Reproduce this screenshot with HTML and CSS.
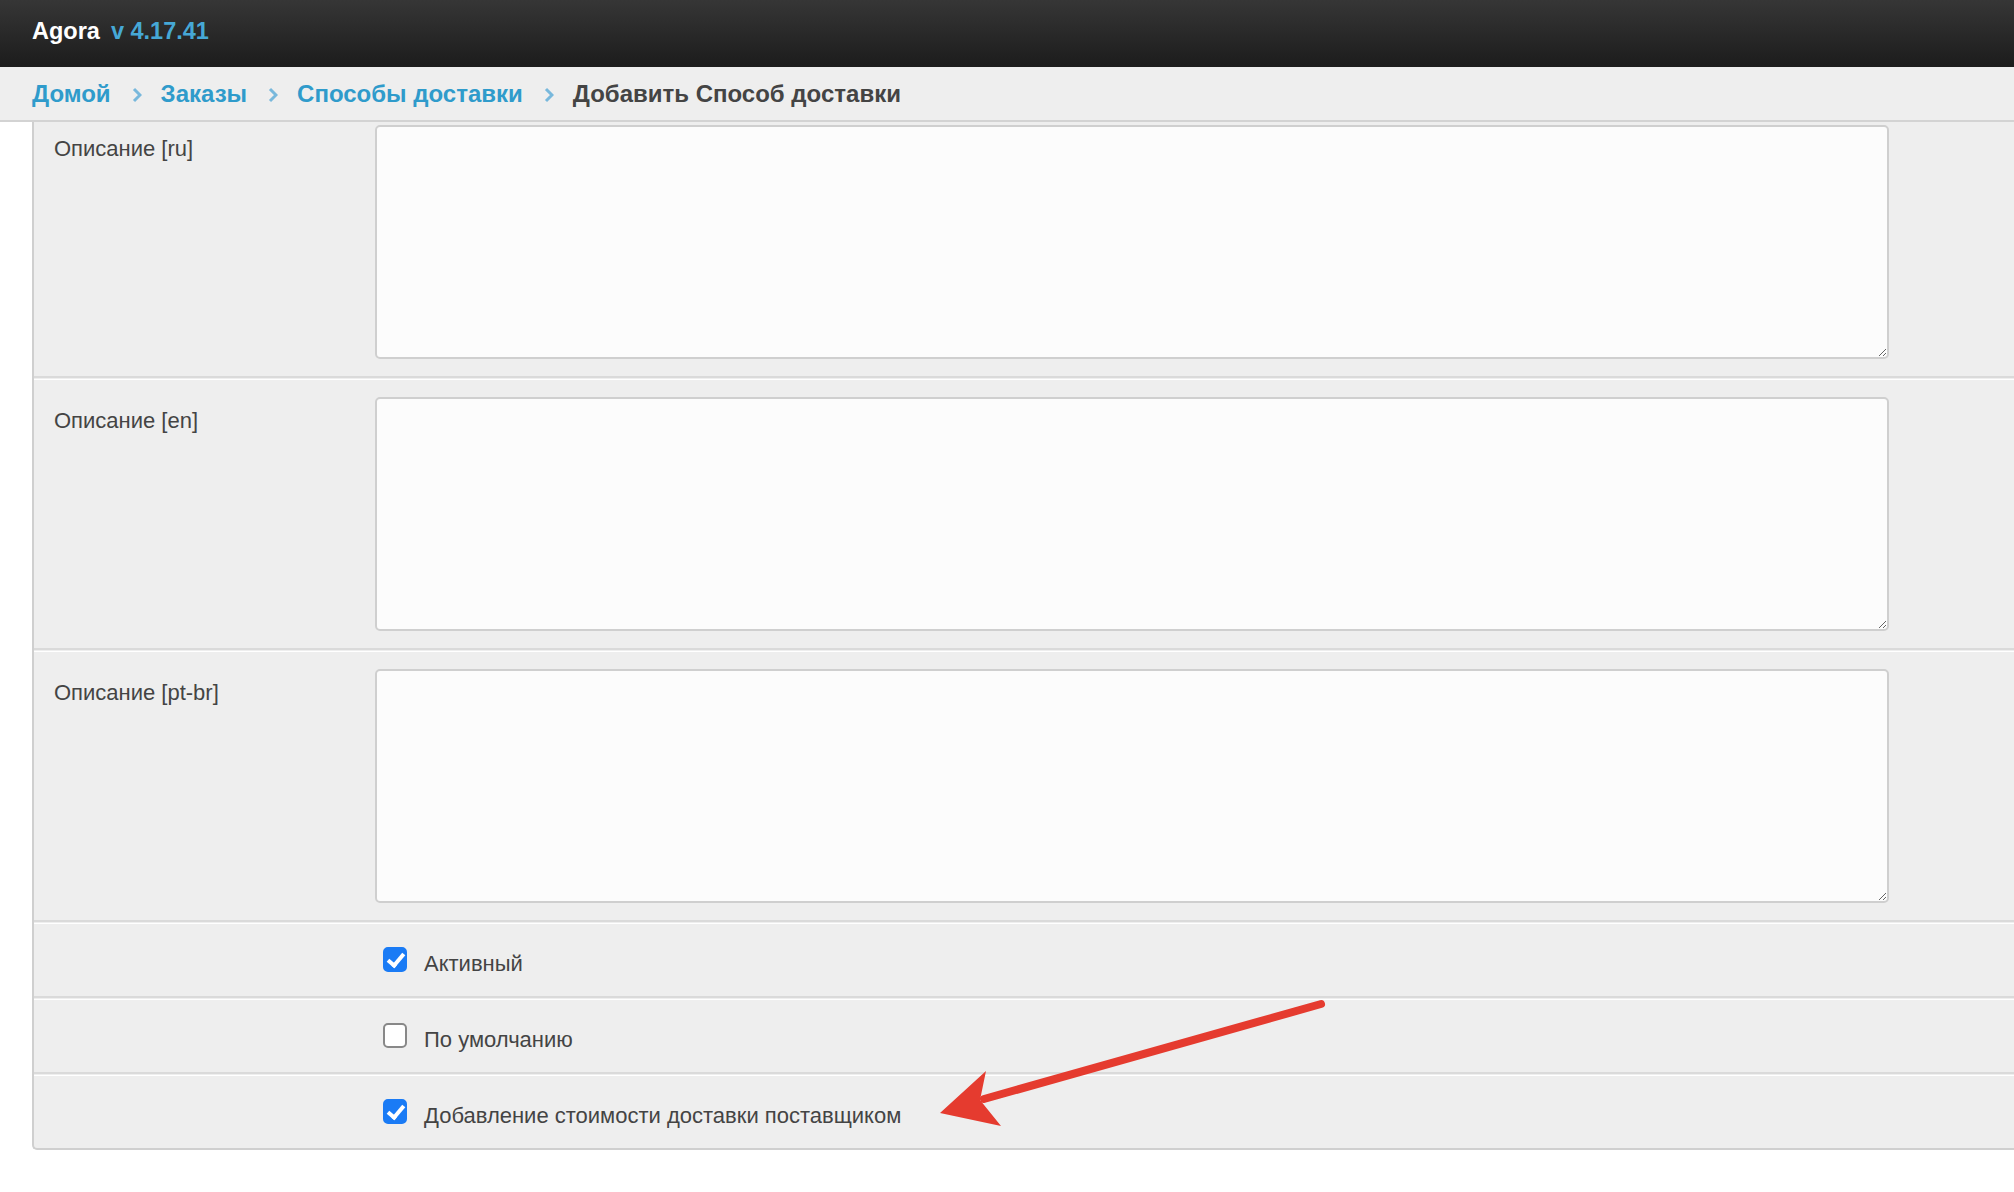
FILE: index.html
```
<!DOCTYPE html>
<html lang="ru">
<head>
	<meta charset="UTF-8">
	<meta name="viewport" content="width=device-width, initial-scale=1.0">
	<link rel="stylesheet" href="styles.css">
	<title>Agora — Добавить Способ доставки</title>
</head>
<body>
	<header class="topbar">
		<span class="brand">Agora</span>
		<span class="version">v 4.17.41</span>
	</header>

	<nav class="breadcrumbs">
		<a href="#">Домой</a>
		<svg class="crumb-sep" viewBox="0 0 10 16"><path d="M2 2l6 6-6 6"/></svg>
		<a href="#">Заказы</a>
		<svg class="crumb-sep" viewBox="0 0 10 16"><path d="M2 2l6 6-6 6"/></svg>
		<a href="#">Способы доставки</a>
		<svg class="crumb-sep" viewBox="0 0 10 16"><path d="M2 2l6 6-6 6"/></svg>
		<span class="current">Добавить Способ доставки</span>
	</nav>

	<main class="content">
		<form class="panel" action="">
			<div class="form-row first">
				<label class="field-label" for="desc_ru">Описание [ru]</label>
				<textarea id="desc_ru"></textarea>
			</div>
			<div class="form-row">
				<label class="field-label" for="desc_en">Описание [en]</label>
				<textarea id="desc_en"></textarea>
			</div>
			<div class="form-row">
				<label class="field-label" for="desc_pt">Описание [pt-br]</label>
				<textarea id="desc_pt"></textarea>
			</div>
			<div class="form-row check-row">
				<span></span>
				<label class="check">
					<input type="checkbox" checked>
					<span>Активный</span>
				</label>
			</div>
			<div class="form-row check-row">
				<span></span>
				<label class="check">
					<input type="checkbox">
					<span>По умолчанию</span>
				</label>
			</div>
			<div class="form-row check-row">
				<span></span>
				<label class="check">
					<input type="checkbox" checked>
					<span>Добавление стоимости доставки поставщиком</span>
				</label>
			</div>
		</form>

		<svg class="pointer" viewBox="0 0 400 140" width="400" height="140">
			<line x1="391" y1="9" x2="54" y2="104" stroke="#e53b2f" stroke-width="8" stroke-linecap="round"/>
			<polygon points="10,118 56,76 50,105 71,131" fill="#e53b2f"/>
		</svg>
	</main>
</body>
</html>
```

FILE: styles.css
```
body {
	margin: 0;
	padding: 0;
	font-family: "Liberation Sans", Arial, Helvetica, sans-serif;
	background: #fff;
	color: #444;
	overflow: hidden;
}

a {
	text-decoration: none;
}

.topbar {
	height: 67px;
	box-sizing: border-box;
	padding: 0 0 4px 32px;
	display: flex;
	align-items: center;
	background: linear-gradient(#363636, #1c1c1c);
	font-size: 23.5px;
	font-weight: bold;
}
.topbar .brand {
	color: #fff;
}
.topbar .version {
	color: #46a8d6;
	margin-left: 11px;
}

.breadcrumbs {
	height: 53px;
	display: flex;
	align-items: center;
	padding-left: 32px;
	background: #eee;
	border-bottom: 2px solid #d3d3d3;
	font-size: 24px;
	font-weight: bold;
}
.breadcrumbs a {
	color: #2f9bcb;
}
.breadcrumbs .current {
	color: #444;
}
.crumb-sep {
	width: 10px;
	height: 16px;
	margin: 2px 19px 0 21px;
	fill: none;
	stroke: #78b8dc;
	stroke-width: 3;
}

.content {
	position: relative;
	padding-left: 32px;
}

.panel {
	background: #eee;
	border-left: 2px solid #cfcfcf;
	border-bottom: 2px solid #cfcfcf;
	border-bottom-left-radius: 5px;
	font-size: 22px;
}

.form-row {
	display: grid;
	grid-template-columns: 341px 1514px;
	padding: 17px 0;
	border-bottom: 2px solid #dadada;
}
.form-row + .form-row {
	margin-top: 1px;
	border-top: 1px solid #fff;
}
.form-row.first {
	padding-top: 3px;
}
.form-row:last-child {
	border-bottom: 0;
}

.field-label {
	padding: 9px 0 0 20px;
	line-height: 30px;
	color: #444;
}

.form-row textarea {
	box-sizing: border-box;
	width: 1514px;
	height: 234px;
	margin: 0;
	border: 2px solid #cfcfcf;
	border-radius: 5px;
	background: #fcfcfc;
	font: inherit;
}

.check-row {
	padding: 23px 0 24px;
}

.check {
	display: flex;
	align-items: center;
	height: 25px;
	margin-left: 8px;
	color: #444;
}
.check span {
	line-height: 25px;
	margin: 8px 0 0 17px;
}
.check input {
	appearance: none;
	-webkit-appearance: none;
	position: relative;
	flex: none;
	width: 24px;
	height: 25px;
	margin: 0;
	box-sizing: border-box;
	border: 2px solid #888;
	border-radius: 5px;
	background: #fff;
}
.check input:checked {
	border-color: #1a7bf5;
	background: #1a7bf5;
}
.check input:checked::after {
	content: '';
	position: absolute;
	left: 6px;
	top: 1px;
	width: 6px;
	height: 13px;
	border: solid #fff;
	border-width: 0 4px 4px 0;
	transform: rotate(40deg);
}

.pointer {
	position: absolute;
	left: 930px;
	top: 873px;
	pointer-events: none;
}
```
